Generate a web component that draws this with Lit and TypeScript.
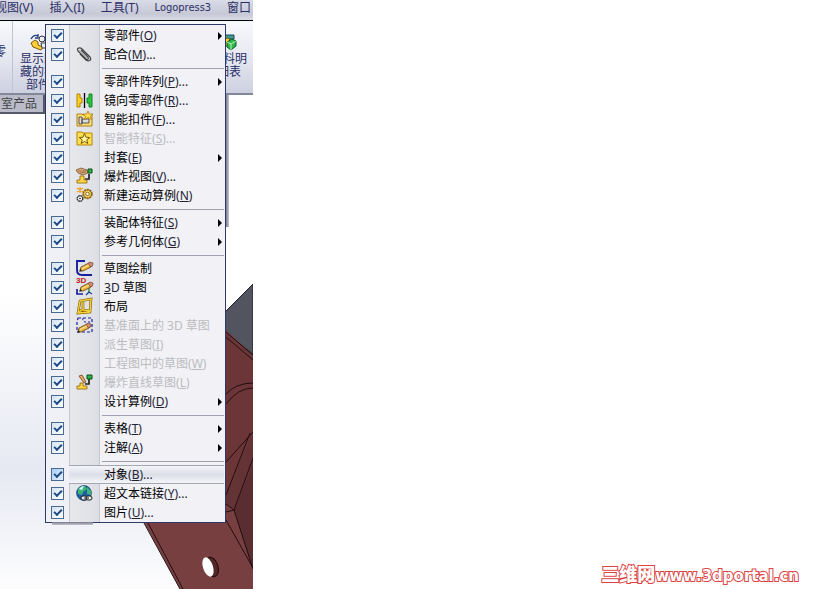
import { LitElement, html, css, svg, nothing } from "lit";
import { customElement, property } from "lit/decorators.js";

interface Item {
  text: string;
  key?: string;
  prefix?: string;
  more?: boolean;
  sub?: boolean;
  off?: boolean;
  hot?: boolean;
  icon?: string;
}

const groups: Item[][] = [
  [
    { text: "零部件", key: "O", sub: true },
    { text: "配合", key: "M", more: true, icon: "clip" },
  ],
  [
    { text: "零部件阵列", key: "P", more: true, sub: true },
    { text: "镜向零部件", key: "R", more: true, icon: "mirror" },
    { text: "智能扣件", key: "F", more: true, icon: "fastener" },
    { text: "智能特征", key: "S", more: true, off: true, icon: "smart" },
    { text: "封套", key: "E", sub: true },
    { text: "爆炸视图", key: "V", more: true, icon: "explode" },
    { text: "新建运动算例", key: "N", icon: "motion" },
  ],
  [
    { text: "装配体特征", key: "S", sub: true },
    { text: "参考几何体", key: "G", sub: true },
  ],
  [
    { text: "草图绘制", icon: "sketch" },
    { text: " 草图", prefix: "3D", icon: "sketch3d" },
    { text: "布局", icon: "layout" },
    { text: "基准面上的 3D 草图", off: true, icon: "plane" },
    { text: "派生草图", key: "I", off: true },
    { text: "工程图中的草图", key: "W", off: true },
    { text: "爆炸直线草图", key: "L", off: true, icon: "line" },
    { text: "设计算例", key: "D", sub: true },
  ],
  [
    { text: "表格", key: "T", sub: true },
    { text: "注解", key: "A", sub: true },
  ],
  [
    { text: "对象", key: "B", more: true, hot: true },
    { text: "超文本链接", key: "Y", more: true, icon: "globe" },
    { text: "图片", key: "U", more: true },
  ],
];

const pencil = svg`<path d="M5 7 13 3l3 1-1 3-8 4-3 0z" fill="#f0b840" stroke="#5c3c10" stroke-width=".8"/><path d="m12 3.500 2-1.500 3 1-.5 3-2 1z" fill="#d88a70" stroke="#5c3030" stroke-width=".6"/><path d="M6 8.500 13 5" stroke="#ffe9a0"/><path d="m3 11.500 1.500-2.500 1.500 2z" fill="#222"/>`;

const icons: Record<string, unknown> = {
  clip: svg`<path d="m4 8 6 6c3 2 6 0 4-3L6 3C4 1 0 2 2 5l8 8c2 1 3 0 2-2L5 4" fill="none" stroke="#444" stroke-width="1.200"/><path d="m3 4 9 9" stroke="#999" stroke-width=".7"/>`,
  mirror: svg`<path d="M1 2h3v4h2v5H4v4H1z" fill="#ffd21e" stroke="#a87800" stroke-width=".9"/><path d="M16 2h-3v4h-2v5h2v4h3z" fill="#28c83c" stroke="#0b7a1c" stroke-width=".9"/><path d="M8.500 1v15" stroke="#000" stroke-width="1.300"/>`,
  fastener: svg`<path d="M1 3h5l1 1h9v11H1z" fill="#ffe27a" stroke="#b07c10"/><path d="M3 6h3v7H3zM6 8h7v4H6z" fill="#ddd" stroke="#444" stroke-width=".9"/><path d="m12 0 1.200 3H17l-2.500 2.200 1 3.300L12 6.500 8.500 8.500l1-3.300L7 3h3.800z" fill="#ffe04a" stroke="#a87010" stroke-width=".7"/>`,
  smart: svg`<path d="M1 2h5l1 1h9v12H1z" fill="#ffe04e" stroke="#b88408"/><path d="m8.500 3.500 1.500 3.700 3.800.3-3 2.300 1 3.700-3.300-2-3.300 2 1-3.700-3-2.300 3.800-.3z" fill="#fff6a0" stroke="#7c5808"/>`,
  explode: svg`<path d="m0 2 5-2 6 2 1 3-5 2-5-2z" fill="#dca878" stroke="#6e4522" stroke-width=".7"/><path d="M2 3h8M4 5l6-1" stroke="#7c5030" stroke-width=".6"/><path d="M13 6v5H9" stroke="#222" stroke-width="1.700" fill="none"/><path d="M12 1h4v4h-4z" fill="#27b548" stroke="#0a4c18"/><path d="M4 8h4v4h3v3H1v-3h3z" fill="#ffd64a" stroke="#9a7008" stroke-width=".9"/>`,
  motion: svg`<circle cx="11.500" cy="7" r="4.300" fill="#ffdc68" stroke="#8c6612" stroke-width="1.900" stroke-dasharray="2.200 .5"/><circle cx="11.500" cy="7" r="1.800" fill="#fff" stroke="#8c6612"/><circle cx="4" cy="11.500" r="2.800" fill="#fff" stroke="#333" stroke-width="1.500" stroke-dasharray="1.700 .5"/><circle cx="4" cy="11.500" r=".8"/><path d="M4 0v6M1 1l6 4M7 1 1 5" stroke="#ee9d20" stroke-width="1.200"/>`,
  sketch: svg`<path d="M9 1H1v9q0 5 5 5h10" fill="none" stroke="#1820a0" stroke-width="1.900"/>${pencil}`,
  sketch3d: svg`<text x="0" y="4" font-size="8" font-weight="bold" fill="#c01818">3D</text><path d="M1 10v5h6" fill="none" stroke="#1820a0" stroke-width="1.700"/><path d="M13 9v4" stroke="#198a2a" stroke-width="1.300"/><path d="m10 16 3-3 3 2" fill="none" stroke="#1d3aa0" stroke-width="1.200"/><g transform="translate(0 1)">${pencil}</g>`,
  layout: svg`<path d="m4 3 11-2-1 13-12 1zM7 4v8l7 1M7 11l-5 4" fill="none" stroke="#7c5c00" stroke-width="2.600"/><path d="m4 3 11-2-1 13-12 1zM7 4v8l7 1M7 11l-5 4" fill="none" stroke="#f7d238" stroke-width="1.400"/>`,
  plane: svg`<path d="m2 1 14 0v14H1V5z" fill="none" stroke="#1820a0" stroke-width="1.200" stroke-dasharray="3 2"/><path d="M7 1q-1 4 3 4h6" fill="none" stroke="#1820a0" stroke-dasharray="2 2"/><g transform="translate(-2 4)">${pencil}</g>`,
  line: svg`<path d="m3 2 3-1 4 7-2 1z" fill="#e9a85c" stroke="#6e4522" stroke-width=".8"/><path d="M13 5v5H9" stroke="#222" stroke-width="1.700" fill="none"/><path d="M11 1h5v4h-5z" fill="#27b548" stroke="#0a4c18"/><path d="M4 9h3v3h4v3H1v-3h3z" fill="#ffd64a" stroke="#9a7008" stroke-width=".9"/>`,
  globe: svg`<circle cx="8" cy="8" r="7.500" fill="#1c5ca8" stroke="#153c66" stroke-width=".6"/><path d="M2 4q4-4 7-3l2 3-4 3-1 3-4-1zM11 2l4 4v4l-4-1z" fill="#3cb474"/><path d="M3 4q2-3 5-3L6 5z" fill="#d4fbff"/><rect x="5" y="11" width="6" height="4" rx="2" fill="#eee" stroke="#222"/><rect x="10" y="11" width="6" height="4" rx="2" fill="#eee" stroke="#222"/><path d="M8 13h5" stroke="#222"/>`,
  show: svg`<path d="M1 5q3-5 7-3M8 0v4H5" fill="none" stroke="#223a86" stroke-width="1.300"/><path d="m1 9 4-3 3 2v3l5 2-2 3-8-3z" fill="#ffcf3a" stroke="#7c5808"/><circle cx="12" cy="5" r="3" fill="#eee" stroke="#333"/><path d="M11 9h5v5h-4z" fill="#eee" stroke="#444"/>`,
  bom: svg`<path d="M0 1h13v4H0z" fill="#3f9a88" stroke="#246"/><path d="m1 6 6-2 3 3-1 7-7-4z" fill="#ffd33a" stroke="#7c5808"/><path d="m6 8 5-3 4 2v5l-5 4-4-3z" fill="#2db84c" stroke="#0b5a1c"/><path d="m6 8 4 2 5-3M10 10v6" stroke="#b8f4b8" fill="none"/>`,
};

const icon = (name: string) =>
  html`<svg class="icon" width="17" height="17" viewBox="0 0 17 17" aria-hidden="true">${icons[name]}</svg>`;

@customElement("insert-menu")
class InsertMenu extends LitElement {
  @property({ attribute: false }) groups: Item[][] = [];

  static styles = css`
    :host {
      display: block;
      box-sizing: border-box;
      padding: 1px 1px 0 1px;
      border: 1px solid #2d3a68;
      color: #000;
      background: linear-gradient(90deg, #f0f1f6 23px, #c4c7d0 23px, #c4c7d0 24px, #e6e8ec 24px, #dddfe4 53px, #c4c7d0 53px, #c4c7d0 54px, #f1f1f6 54px);
    }
    .row {
      display: grid;
      grid-template-columns: 22px 31px 1fr 10px;
      align-items: center;
      height: 19px;
    }
    .tick {
      appearance: none;
      box-sizing: border-box;
      width: 13px;
      height: 13px;
      margin: 0 0 0 4px;
      border: 1px solid #4a6a90;
      background: linear-gradient(135deg, #d3e2f3, #fff);
      display: grid;
      place-items: center;
    }
    .tick:checked::before {
      content: "";
      box-sizing: border-box;
      width: 8px;
      height: 5px;
      border: solid #1c4a86;
      border-width: 0 0 2px 2px;
      transform: translateY(-1px) rotate(-45deg);
    }
    .hot .tick {
      background: linear-gradient(135deg, #a9cdf2, #e4f1ff);
    }
    .pic {
      display: grid;
      place-items: center;
      height: 19px;
    }
    .icon {
      overflow: visible;
      font-family: "Liberation Sans", sans-serif;
    }
    .cmd {
      grid-column: 3 / 5;
      box-sizing: border-box;
      display: flex;
      align-items: center;
      height: 19px;
      padding: 1px 2px 0 4px;
      border: 0;
      background: none;
      color: inherit;
      font: inherit;
      text-align: left;
      white-space: pre;
    }
    .label {
      flex: 1;
    }
    .latin {
      color: #223;
    }
    .cmd:disabled,
    .cmd:disabled .latin {
      color: #bcbcc0;
    }
    .hot .pic,
    .hot .cmd {
      box-sizing: border-box;
      border: solid #a4a7b2;
      border-width: 1px 0;
      background: linear-gradient(#f4f5f9, #dcdfe8 50%, #f4f5f9);
    }
    .arrow {
      border: 4px solid transparent;
      border-left-color: #000;
      border-right: 0;
    }
    .rule {
      height: 1px;
      margin: 4px 0 3px 55px;
      border: 0;
      background: #a0a1ae;
    }
  `;

  private row(item: Item) {
    const name = item.text + (item.key ?? "");
    return html`<div class="row ${item.hot ? "hot" : ""}">
      <input class="tick" type="checkbox" checked aria-label=${name} />
      <span class="pic">${item.icon ? icon(item.icon) : nothing}</span>
      <button class="cmd" ?disabled=${item.off}><span class="label">${item.prefix
        ? html`<span class="latin"><u>3</u>D</span>`
        : nothing}${item.text}${item.key
        ? html`<span class="latin">(<u>${item.key}</u>)${item.more ? "..." : ""}</span>`
        : nothing}</span>${item.sub ? html`<span class="arrow"></span>` : nothing}</button>
    </div>`;
  }

  render() {
    return this.groups.map(
      (g, i) => html`${i ? html`<hr class="rule" />` : nothing}${g.map((it) => this.row(it))}`
    );
  }
}

@customElement("app-root")
class AppRoot extends LitElement {
  static styles = css`
    :host {
      display: flex;
      min-height: 100vh;
      background: #fff;
      font: 12px/14px "Noto Sans", "Noto Sans CJK SC", sans-serif;
    }
    .app {
      position: relative;
      flex: 0 0 253px;
      display: flex;
      flex-direction: column;
      overflow: hidden;
      color: #2c2f66;
    }
    .bar {
      box-sizing: border-box;
      display: flex;
      gap: 16px;
      height: 21px;
      margin-left: -5px;
      background: linear-gradient(#d9dbe7, #c6c8d6 70%, #d8dae4);
      border-bottom: 1px solid #000;
      line-height: 16px;
      white-space: nowrap;
    }
    .bar a {
      color: inherit;
      text-decoration: none;
    }
    .bar .small {
      font: 11px/16px "DejaVu Sans Condensed", sans-serif;
    }
    .tools {
      display: flex;
      height: 74px;
      box-sizing: border-box;
      border-bottom: 2px solid #83879a;
      background: linear-gradient(#f8f9fc, #e6e8f1 50%, #cdd0df);
    }
    .tool {
      display: flex;
      flex-direction: column;
      align-items: center;
      width: 48px;
      margin-left: 1px;
      padding: 13px 0 0;
      border: 0;
      background: none;
      color: inherit;
      font: 12px/13px "Noto Sans CJK SC", sans-serif;
    }
    .edge {
      width: 13px;
      margin: 0;
      padding-top: 23px;
      align-items: flex-end;
      padding-right: 6px;
      border-right: 1px solid #c0c4d2;
    }
    .last {
      margin-left: auto;
    }
    .stage {
      position: relative;
      flex: 1;
      background: linear-gradient(#fff, #fff 40%, #e6e9f2 76%, #fdfdfe);
    }
    .model {
      position: absolute;
      right: 0;
      bottom: 0;
    }
    .tab {
      position: relative;
      width: 45px;
      height: 19px;
      padding: 0 0 0 1px;
      border: solid #55586a;
      border-width: 0 2px 2px 0;
      background: #b9bcc8;
      color: #444;
      font: inherit;
      text-align: left;
    }
    .shade {
      position: absolute;
      right: 24px;
      top: 0;
      width: 3px;
      height: 132px;
      background: linear-gradient(90deg, #77798a, #c4c5cc);
    }
    .menu {
      position: absolute;
      left: 45px;
      top: 24px;
      width: 181px;
    }
    .menu::after {
      content: "";
      position: absolute;
      left: 6px;
      top: 100%;
      width: 41px;
      height: 3px;
      background: linear-gradient(#77798a, #c4c5cc);
    }
    .panel {
      flex: 1;
      display: flex;
      align-items: flex-end;
      justify-content: flex-end;
      padding: 0 20px 4px 0;
    }
    .mark {
      color: #fff;
      font: bold 15px/18px "DejaVu Sans", sans-serif;
      -webkit-text-stroke: 2px #dc4444;
      paint-order: stroke;
      text-decoration: none;
      white-space: nowrap;
    }
    .han {
      font: 900 18px/18px "Noto Sans CJK SC", sans-serif;
    }
  `;

  render() {
    return html`
      <main class="app">
        <nav class="bar">
          <a href="#">视图(V)</a>
          <a href="#">插入(I)</a>
          <a href="#">工具(T)</a>
          <a href="#" class="small">Logopress3</a>
          <a href="#">窗口</a>
        </nav>
        <div class="tools">
          <button class="tool edge">零</button>
          <button class="tool">${icon("show")}<span>显示隐<br />藏的零<br />部件</span></button>
          <button class="tool last">${icon("bom")}<span>材料明<br />细表</span></button>
        </div>
        <section class="stage">
          <svg class="model" width="110" height="310" viewBox="143 279 110 310" aria-hidden="true">
            <path d="M253 284v70l-40-30z" fill="#525460" stroke="#20222c" />
            <path d="M140 515V330h86l27 25v234h-73z" fill="#783f41" />
            <path d="M226 332l27 23v77l-27 63z" fill="#6c3638" />
            <path d="M253 432v40l-19 38-8-6v-10z" fill="#643335" />
            <path d="m234 510 19-45v105z" fill="#5a2e31" />
            <path d="M226 332l27 23M226 337l27 23M226 394q10-11 27-11M226 404q12-16 27-16M226 462l27-30M226 495l24-62M226 504l8 6 19-52M226 512l8-2 19 59M226 520l27 48M144 523l36 66M148 523l35 66" fill="none" stroke="#220e10" />
            <ellipse cx="212" cy="567" rx="6" ry="10" transform="rotate(-18 212 567)" fill="#532628" stroke="#200c0c" />
            <ellipse cx="208" cy="567" rx="5" ry="10" transform="rotate(-18 208 567)" fill="#fff" />
          </svg>
          <span class="shade"></span>
          <button class="tab">室产品</button>
        </section>
        <insert-menu class="menu" .groups=${groups}></insert-menu>
      </main>
      <aside class="panel">
        <a class="mark" href="#"><span class="han">三维网</span>www.3dportal.cn</a>
      </aside>
    `;
  }
}
